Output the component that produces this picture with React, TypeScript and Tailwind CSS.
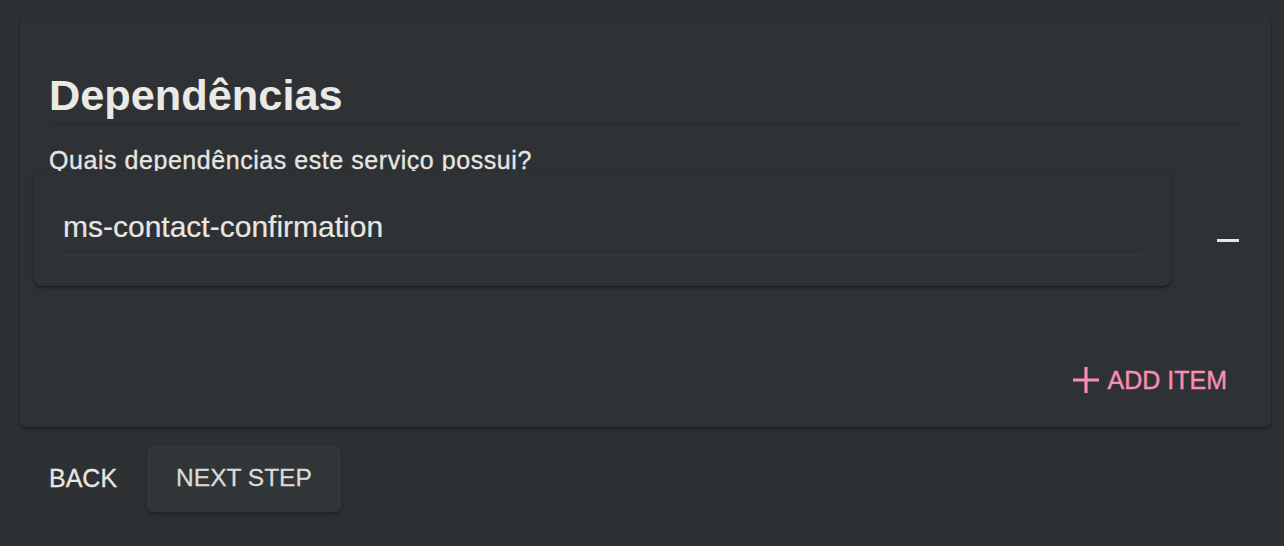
const font = { fontFamily: '"Liberation Sans", Arial, Helvetica, sans-serif' };

function PlusIcon() {
  return (
    <svg width="26" height="26" viewBox="0 0 26 26" className="shrink-0">
      <path d="M13 0v26M0 13h26" stroke="currentColor" strokeWidth="3.2" fill="none" />
    </svg>
  );
}

function DependencyRow({ value }: { value: string }) {
  return (
    <div className="flex items-start -mt-[3px]">
      <div className="relative flex-1 -ml-[15px] rounded-[8px] bg-[#2e3235] pl-[29px] pr-[29px] pt-[38px] pb-[30px] shadow-[0_2px_4px_rgba(0,0,0,0.35),0_1px_1px_rgba(0,0,0,0.2)]">
        <div className="border-b border-[#34393c] pb-[10px] text-[30px] leading-[36px] text-[#e8e6e3] [-webkit-text-stroke:0.2px_#e8e6e3]">
          {value}
        </div>
      </div>
      <button className="ml-[46px] mt-[68px] flex h-[3px] w-[22px] items-center">
        <span className="block h-[3px] w-[22px] bg-[#e8e6e3]" />
      </button>
      <div className="w-[3px]" />
    </div>
  );
}

export default function App() {
  return (
    <div
      className="min-h-[546px] w-full bg-[#2d3134] pl-[20px] pr-[13px] pt-[17px]"
      style={font}
    >
      <div className="rounded-[6px] bg-[#2e3235] px-[29px] pt-[54px] pb-[32px] shadow-[0_2px_3px_rgba(0,0,0,0.35),0_0_1px_rgba(0,0,0,0.25)]">
        <h1 className="border-b border-[#272b2e] pb-[4px] text-[43.3px] font-bold leading-[48px] text-[#ebe9e6]">
          Dependências
        </h1>
        <p className="mt-[22px] text-[25px] leading-[28px] tracking-[0.55px] text-[#e8e6e3] [-webkit-text-stroke:0.3px_#e8e6e3]">
          Quais dependências este serviço possui?
        </p>
        <DependencyRow value="ms-contact-confirmation" />
        <div className="mt-[79px] flex justify-end">
          <button className="flex items-center gap-[9px] pr-[15px] text-[25px] leading-[30px] text-[#f78eb4] [-webkit-text-stroke:0.4px_#f78eb4]">
            <PlusIcon />
            <span>ADD ITEM</span>
          </button>
        </div>
      </div>
      <div className="mt-[18px] flex items-center gap-[1px]">
        <button className="h-[67px] px-[29px] text-[25px] text-[#e8e6e3] [-webkit-text-stroke:0.3px_#e8e6e3]">
          BACK
        </button>
        <button className="h-[67px] rounded-[6px] bg-[#303538] px-[29px] text-[24.5px] text-[#dcdad7] shadow-[0_2px_4px_rgba(0,0,0,0.35)] [-webkit-text-stroke:0.3px_#dcdad7]">
          NEXT STEP
        </button>
      </div>
    </div>
  );
}
